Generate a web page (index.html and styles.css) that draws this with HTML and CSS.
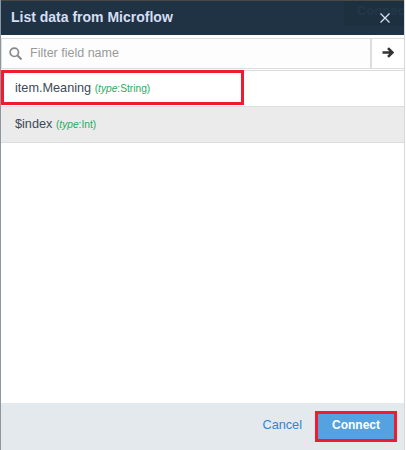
FILE: index.html
```html
<!DOCTYPE html>
<html lang="en">
<head>
    <meta charset="UTF-8">
    <title>List data from Microflow</title>
    <link rel="stylesheet" href="styles.css">
</head>
<body>
    <div class="dialog">
        <div class="dialog-header">
            <h1>List data from Microflow</h1>
            <div class="backdrop-label"><span>Connect</span></div>
            <button class="close-btn" type="button">
                <svg width="10" height="10" viewBox="0 0 10 10"><path d="M.5.5l9 9M9.500.5l-9 9" stroke="#d5e0f0" stroke-width="1.300" fill="none"/></svg>
            </button>
        </div>
        <div class="filter-row">
            <div class="filter-box">
                <svg width="13" height="13" viewBox="0 0 13 13"><circle cx="5.300" cy="5.300" r="4.200" stroke="#8a8a8a" stroke-width="1.700" fill="none"/><path d="M8.500 8.500l4 4" stroke="#8a8a8a" stroke-width="2" fill="none"/></svg>
                <span class="filter-placeholder">Filter field name</span>
            </div>
            <button class="go-btn" type="button">
                <svg width="12" height="11" viewBox="0 0 12 11"><path d="M.5 5.500h9M6 1.200l4.300 4.300L6 9.800" stroke="#333333" stroke-width="2.600" fill="none"/></svg>
            </button>
        </div>
        <ul class="field-list">
            <li class="field-row">
                item.Meaning <span class="field-type">(<i>type</i>:String)</span>
                <div class="highlight highlight-row"></div>
            </li>
            <li class="field-row alt">
                $index <span class="field-type">(<i>type</i>:Int)</span>
            </li>
        </ul>
        <div class="dialog-footer">
            <a class="cancel-link">Cancel</a>
            <button class="connect-btn" type="button">Connect</button>
        </div>
    </div>
</body>
</html>
```
FILE: styles.css
```css
html, body {
    margin: 0;
    padding: 0;
}

body {
    width: 406px;
    height: 450px;
    overflow: hidden;
    font-family: "Liberation Sans", Arial, sans-serif;
    background-color: #ffffff;
}

.dialog {
    width: 405px;
    height: 450px;
    display: flex;
    flex-direction: column;
    border-left: 1px solid #8b96a0;
    border-right: 1px solid #d8d8d8;
    box-sizing: border-box;
    background-color: #ffffff;
}

.dialog-header {
    height: 35px;
    flex: none;
    display: flex;
    align-items: center;
    position: relative;
    background-color: #203345;
    border-top: 1px solid #4a4a44;
    box-sizing: border-box;
}

.dialog-header h1 {
    margin: 0 0 2px 10px;
    font-size: 14px;
    font-weight: bold;
    color: #d5def2;
}

.backdrop-label {
    position: absolute;
    right: 0;
    top: 0;
    width: 60px;
    height: 25px;
    overflow: hidden;
    white-space: nowrap;
    background-color: #1d3040;
}

.backdrop-label span {
    font-size: 13px;
    font-weight: bold;
    color: #22384a;
    padding-left: 13px;
    line-height: 20px;
}

.close-btn {
    position: absolute;
    right: 14px;
    top: 12px;
    padding: 0;
    border: none;
    background: none;
    line-height: 0;
}

.filter-row {
    height: 31px;
    flex: none;
    display: flex;
    margin-top: 3px;
    border-top: 1px solid #dddddd;
    border-bottom: 1px solid #dddddd;
    box-sizing: border-box;
}

.filter-box {
    flex: 1;
    display: flex;
    align-items: center;
    gap: 8px;
    padding: 0 0 1px 7px;
    background-color: #fdfdfd;
    border-left: 1px solid #dddddd;
    border-right: 2px solid #dddddd;
}

.filter-placeholder {
    font-size: 12.500px;
    color: #999999;
}

.go-btn {
    width: 32px;
    flex: none;
    padding: 0 0 2px;
    border: none;
    background: #ffffff;
    line-height: 0;
}

.field-list {
    flex: 1;
    margin: 1px 0 0;
    padding: 0;
    list-style: none;
    border-top: 1px solid #dddddd;
}

.field-row {
    position: relative;
    height: 36px;
    line-height: 34px;
    padding-left: 14px;
    font-size: 12.700px;
    color: #3d4a56;
    border-bottom: 1px solid #dddddd;
    box-sizing: border-box;
}

.field-row.alt {
    background-color: #ebebeb;
}

.field-type {
    font-size: 10.200px;
    color: #1fae62;
}

.highlight {
    position: absolute;
    border: 3px solid #ee1c2e;
    box-sizing: border-box;
}

.highlight-row {
    left: 0;
    top: -1px;
    width: 243px;
    height: 35px;
}

.dialog-footer {
    height: 47px;
    flex: none;
    display: flex;
    align-items: center;
    justify-content: flex-end;
    gap: 13px;
    padding-right: 7px;
    background-color: #e4e9ed;
}

.cancel-link {
    font-size: 12.700px;
    color: #2f86d5;
    margin-bottom: 3px;
}

.connect-btn {
    width: 82px;
    height: 31px;
    padding: 0 0 3px;
    border: 3px solid #ee1c2e;
    background-color: #55a2e0;
    color: #ffffff;
    font-family: inherit;
    font-size: 12px;
    font-weight: bold;
}
```
